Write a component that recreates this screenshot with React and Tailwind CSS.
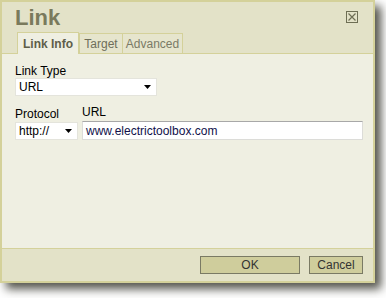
export default function App() {
  const font = { fontFamily: '"Liberation Sans", Arial, sans-serif' };
  const Arrow = () => (
    <svg width="7" height="4" viewBox="0 0 7 4" className="block">
      <path d="M0 0H7L3.5 4Z" fill="#000" />
    </svg>
  );
  return (
    <div className="w-[386px] h-[298px] bg-white relative overflow-hidden" style={font}>
      <div className="w-[375px] h-[283px] border-2 border-[#d4d19a] bg-[#efefe2] flex flex-col shadow-[6px_6px_9px_rgba(40,40,30,0.8)]">
        {/* header */}
        <div className="h-[52px] bg-[#e3e2c8] border-b border-[#d4d19a] flex flex-col relative">
          <div className="pl-[13px] pt-[3px] text-[22px] leading-[26px] font-bold text-[#7a7a5c]">Link</div>
          <button className="absolute left-[344px] top-[9px] w-[12px] h-[12px] border border-[#6e6e54] flex items-center justify-center bg-[#e3e2c8]">
            <svg width="8" height="8" viewBox="0 0 8 8">
              <path d="M0.5 0.5L7.5 7.5M7.5 0.5L0.5 7.5" stroke="#6e6e54" strokeWidth="1.2" />
            </svg>
          </button>
          <div className="flex pl-[15px] mt-auto -mb-px text-[12px]">
            <div className="w-[62px] h-[22px] border border-b-0 border-[#d4d19a] bg-[#efefe2] flex items-center justify-center font-bold text-[#5e5e4a]">Link Info</div>
            <div className="w-[44px] h-[21px] mt-px border border-[#d4d19a] bg-[#e6e5cd] flex items-center justify-center text-[#6e6e5a]">Target</div>
            <div className="w-[60px] h-[21px] mt-px border border-l-0 border-[#d4d19a] bg-[#e6e5cd] flex items-center justify-center text-[#7a7a66]">Advanced</div>
          </div>
        </div>
        {/* body */}
        <div className="flex-1 pl-[13px] pr-[10px] pt-[11px] text-[12px] text-black">
          <div className="leading-[13px]">Link Type</div>
          <div className="w-[142px] h-[18px] bg-white border border-[#e4e4dc] flex items-center pl-[3px] pr-[5px] justify-between">
            <span className="text-[12px]">URL</span>
            <Arrow />
          </div>
          <div className="flex gap-[4px] mt-[10px] items-end">
            <div className="flex flex-col">
              <div className="leading-[13px] mb-[1px]">Protocol</div>
              <div className="w-[63px] h-[18px] bg-white border border-[#e4e4dc] flex items-center pl-[3px] pr-[5px] justify-between">
                <span>http://</span>
                <Arrow />
              </div>
            </div>
            <div className="flex flex-col flex-1">
              <div className="leading-[13px] mb-[2px]">URL</div>
              <div className="h-[19px] bg-white border border-[#dcdcd8] border-t-[#a8a8a8] flex items-center pl-[3px]">
                <span className="text-[#10104a]">www.electrictoolbox.com</span>
              </div>
            </div>
          </div>
        </div>
        {/* footer */}
        <div className="h-[33px] bg-[#e3e2c8] border-t border-[#d4d19a] flex justify-end items-start pt-[7px] pr-[10px] gap-[9px] text-[12px]">
          <button className="w-[100px] h-[18px] bg-[#cfcd9c] border border-[#7a7a64] text-[#333] leading-none">OK</button>
          <button className="w-[54px] h-[18px] bg-[#cfcd9c] border border-[#7a7a64] text-[#333] leading-none">Cancel</button>
        </div>
      </div>
    </div>
  );
}
